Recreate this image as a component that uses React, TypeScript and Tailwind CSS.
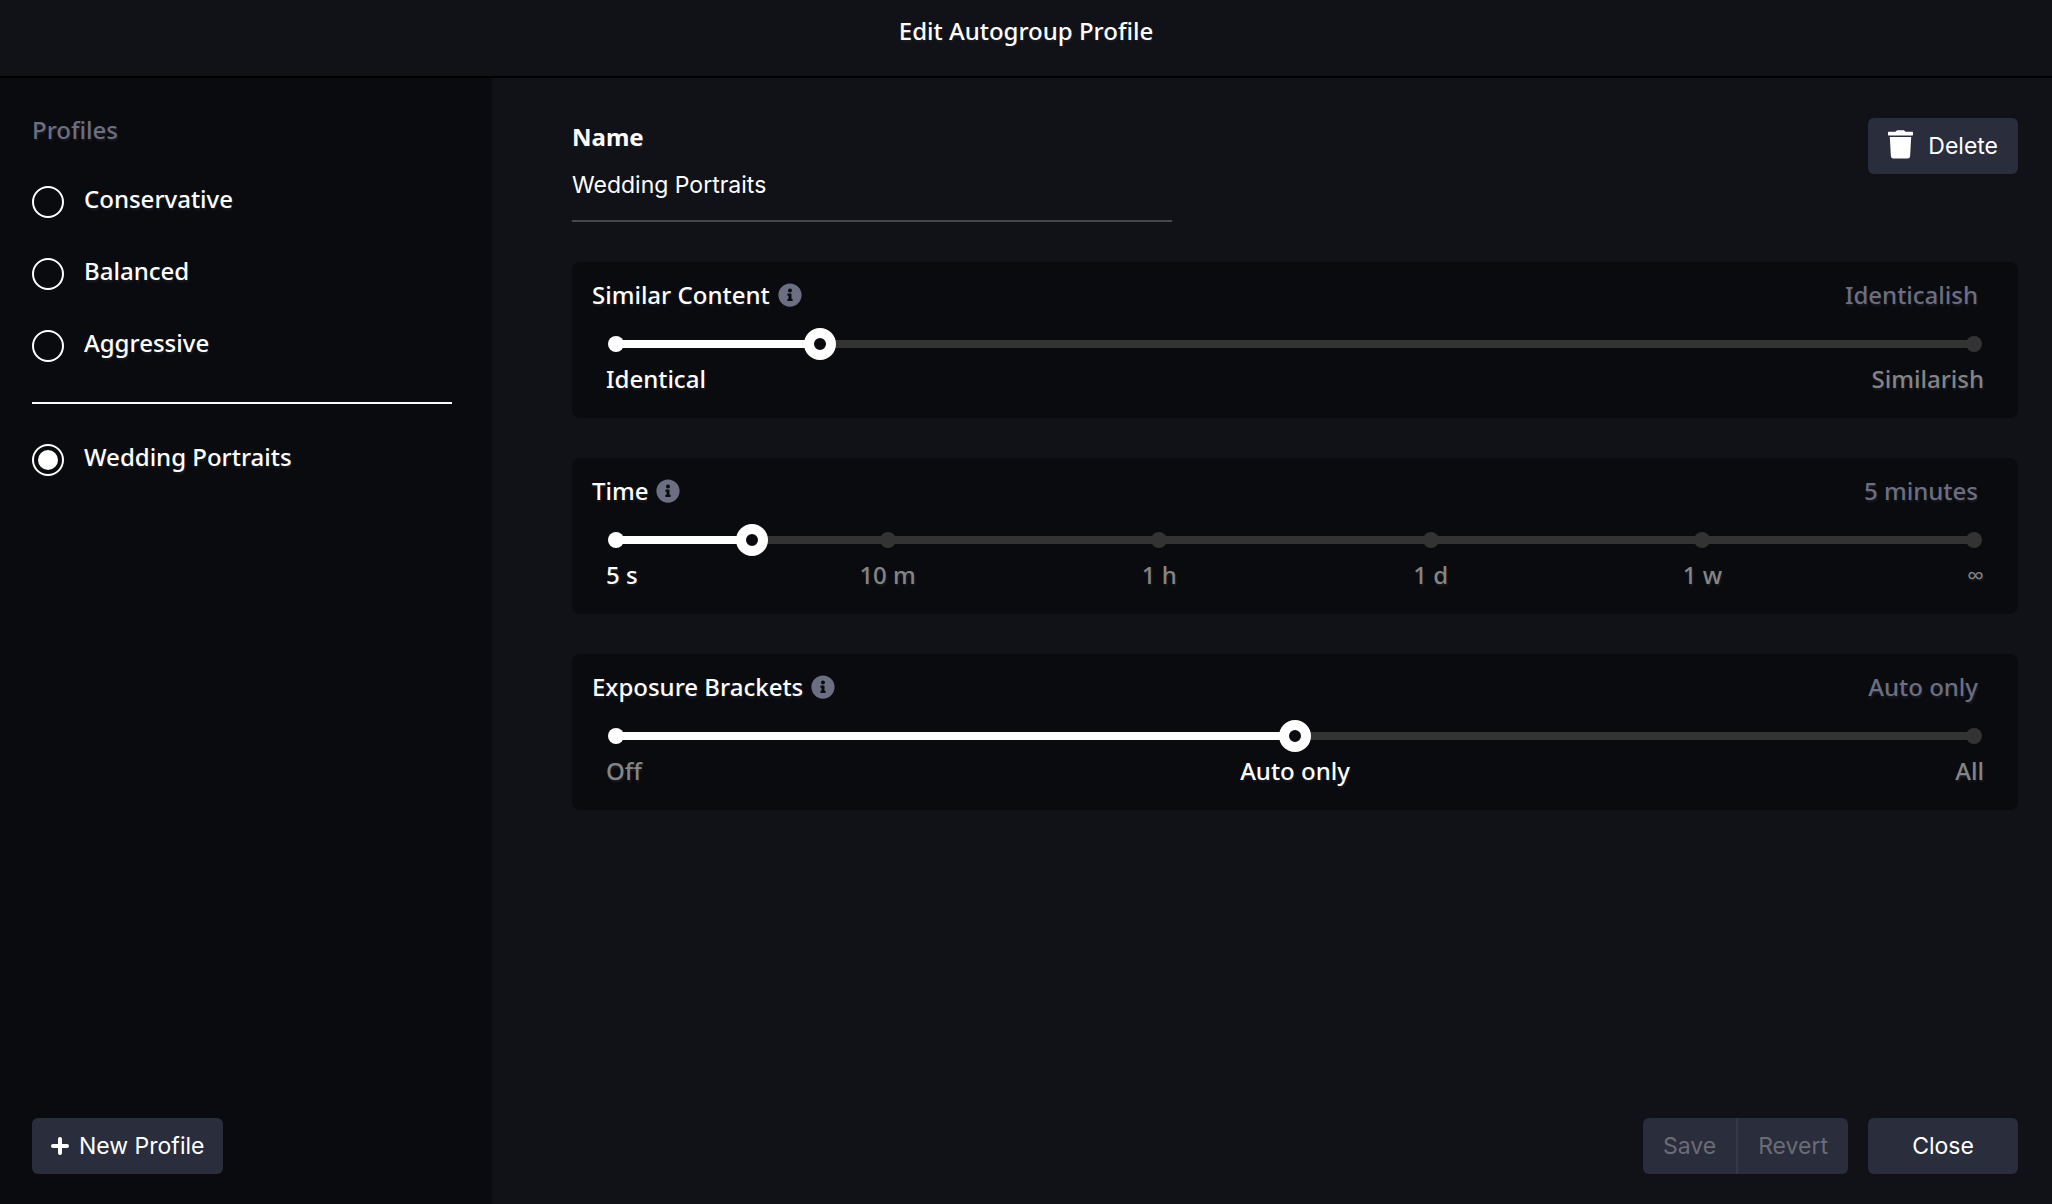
import { useState } from "react";
import { FaInfoCircle } from "react-icons/fa";

const shadow = "[text-shadow:1px_2px_2px_#1c1d23]";
const buttonText = "font-['Inter','Liberation_Sans',sans-serif] text-[23px] font-normal";

function TrashIcon() {
  return (
    <svg aria-hidden="true" viewBox="0 0 25 29" className="mb-1 h-[29px] w-[25px] shrink-0" fill="currentColor">
      <path d="M0.8 1.8H7.6C8.2 0.8 8.9 0.3 10 0.3H15C16.1 0.3 16.8 0.8 17.4 1.8H24.2A0.8 0.8 0 0 1 25 2.6V4.8A0.6 0.6 0 0 1 24.4 5.4H0.6A0.6 0.6 0 0 1 0 4.8V2.6A0.8 0.8 0 0 1 0.8 1.8Z" />
      <path d="M1.8 7H23.2L22.1 26.2A2.5 2.5 0 0 1 19.6 28.5H5.4A2.5 2.5 0 0 1 2.9 26.2Z" />
    </svg>
  );
}

function PlusIcon() {
  return (
    <svg aria-hidden="true" viewBox="0 0 18 18" className="size-[18px] shrink-0" fill="none" stroke="currentColor" strokeWidth="4" strokeLinecap="round">
      <path d="M9 2V16M2 9H16" />
    </svg>
  );
}

type ProfileOptionProps = { name: string; checked: boolean; onSelect: () => void };

function ProfileOption({ name, checked, onSelect }: ProfileOptionProps) {
  return (
    <label className="flex cursor-pointer items-center gap-5">
      <input
        type="radio"
        name="profile"
        checked={checked}
        onChange={onSelect}
        className="grid size-8 shrink-0 appearance-none place-items-center rounded-full border-2 border-white before:size-5 before:rounded-full checked:before:bg-white"
      />
      <span className="pb-[6px] leading-[26px]">{name}</span>
    </label>
  );
}

type SliderCardProps = {
  title: string;
  current: string;
  initial: number;
  labels: string[];
  active: number;
};

function SliderCard({ title, current, initial, labels, active }: SliderCardProps) {
  const [value, setValue] = useState(initial);
  const id = title.toLowerCase().replace(" ", "-");
  const last = labels.length - 1;
  return (
    <section className="rounded-lg bg-[#0a0b0f] pt-[17px] pb-[23px]">
      <div className="flex items-center justify-between pr-10 pl-5">
        <div className="flex items-center gap-2">
          <label htmlFor={id}>{title}</label>
          <FaInfoCircle aria-hidden="true" className="size-6 text-[#6c6e81]" />
        </div>
        <output htmlFor={id} className="text-[#6c6e81]">{current}</output>
      </div>
      <div className="mx-7 mt-[17px] grid h-8 items-center">
        <div className="col-start-1 row-start-1 mx-4 h-2 bg-[#333333]">
          <div className="h-2 bg-white" style={{ width: `${value}%` }} />
        </div>
        <div className="col-start-1 row-start-1 mx-2 flex justify-between">
          {labels.map((label, i) => (
            <span key={label} className={`size-4 rounded-full ${i === 0 ? "bg-white" : "bg-[#333333]"} ${labels.length === 3 && i === 1 ? "invisible" : ""}`} />
          ))}
        </div>
        <input
          id={id}
          type="range"
          min={0}
          max={100}
          value={value}
          onChange={(e) => setValue(Number(e.target.value))}
          className="col-start-1 row-start-1 h-8 w-full cursor-pointer appearance-none bg-transparent [&::-webkit-slider-thumb]:size-8 [&::-webkit-slider-thumb]:appearance-none [&::-webkit-slider-thumb]:rounded-full [&::-webkit-slider-thumb]:border-10 [&::-webkit-slider-thumb]:border-white [&::-webkit-slider-thumb]:bg-[#0a0b0f]"
        />
      </div>
      <div className="mx-11 mt-[3px] flex justify-between">
        {labels.map((label, i) => (
          <div key={label} className={`flex w-0 whitespace-nowrap ${i === 0 ? "justify-start" : i === last ? "justify-end" : "justify-center"}`}>
            <span className={`${i === 0 ? "-ml-[10px]" : i === last ? "-mr-[10px]" : ""} ${i === active ? "text-white" : "text-[#858585]"}`}>{label}</span>
          </div>
        ))}
      </div>
    </section>
  );
}

export default function App() {
  const [profile, setProfile] = useState("Wedding Portraits");
  const [name, setName] = useState("Wedding Portraits");
  return (
    <div className={`flex min-h-screen flex-col bg-[#111217] font-['Noto_Sans','Open_Sans',sans-serif] text-[24px] leading-8 font-medium text-white ${shadow}`}>
      <header className="flex h-[78px] justify-center border-b-2 border-black pt-[15px]">
        <h1>Edit Autogroup Profile</h1>
      </header>
      <div className="flex flex-1">
        <aside className="flex w-[492px] shrink-0 flex-col bg-[#0a0b0f] pt-9 pr-10 pb-[30px] pl-8">
          <h2 className="text-[#6c6e81]">Profiles</h2>
          <div role="radiogroup" aria-label="Profiles" className="mt-10 flex flex-col gap-10">
            {["Conservative", "Balanced", "Aggressive"].map((p) => (
              <ProfileOption key={p} name={p} checked={profile === p} onSelect={() => setProfile(p)} />
            ))}
            <hr className="border-t-2 border-white" />
            <ProfileOption name="Wedding Portraits" checked={profile === "Wedding Portraits"} onSelect={() => setProfile("Wedding Portraits")} />
          </div>
          <button type="button" className={`mt-auto flex h-14 items-center gap-[10px] self-start rounded-md bg-[#2a2d3c] px-[19px] ${buttonText} [text-shadow:none]`}>
            <PlusIcon />
            New Profile
          </button>
        </aside>
        <main className="flex flex-1 flex-col pt-10 pr-[34px] pb-[30px] pl-20">
          <div className="flex items-start justify-between">
            <div className="flex w-[600px] flex-col pt-[3px]">
              <label htmlFor="profile-name" className="font-bold">Name</label>
              <input
                id="profile-name"
                value={name}
                onChange={(e) => setName(e.target.value)}
                className={`h-[69px] border-b-2 border-[#46474c] bg-transparent pb-[3px] outline-none ${buttonText} [text-shadow:none]`}
              />
            </div>
            <button type="button" className={`flex h-14 w-[150px] items-center justify-between rounded-md bg-[#2a2d3c] px-5 ${buttonText} [text-shadow:none]`}>
              <TrashIcon />
              Delete
            </button>
          </div>
          <div className="mt-10 flex flex-col gap-10">
            <SliderCard title="Similar Content" current="Identicalish" initial={15} labels={["Identical", "Similarish"]} active={0} />
            <SliderCard title="Time" current="5 minutes" initial={10} labels={["5 s", "10 m", "1 h", "1 d", "1 w", "∞"]} active={0} />
            <SliderCard title="Exposure Brackets" current="Auto only" initial={50} labels={["Off", "Auto only", "All"]} active={1} />
          </div>
          <div className={`mt-auto flex justify-end gap-5 ${buttonText} [text-shadow:none]`}>
            <div className="flex h-14 overflow-hidden rounded-md bg-[#2a2d3c] text-[#6b6c75]">
              <button type="button" disabled className="px-5">Save</button>
              <button type="button" disabled className="border-l-2 border-[#373847] px-5">Revert</button>
            </div>
            <button type="button" className="h-14 w-[150px] rounded-md bg-[#2a2d3c]">Close</button>
          </div>
        </main>
      </div>
    </div>
  );
}
